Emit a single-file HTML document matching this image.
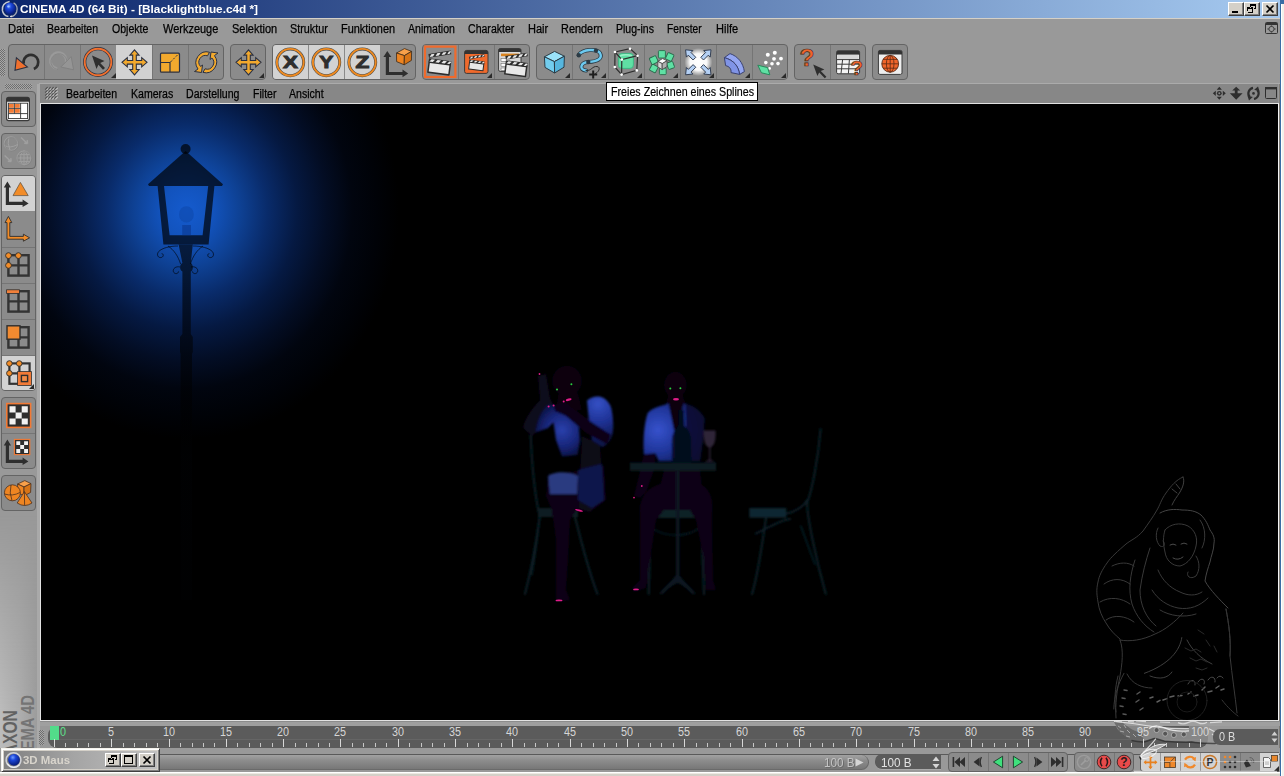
<!DOCTYPE html>
<html><head><meta charset="utf-8"><title>CINEMA 4D</title>
<style>
*{box-sizing:border-box;margin:0;padding:0}
html,body{width:1284px;height:776px;overflow:hidden;background:#999;font-family:"Liberation Sans",sans-serif;}
.a{position:absolute}
svg{position:absolute;overflow:visible}
#title{left:0;top:0;width:1280px;height:18px;background:linear-gradient(90deg,#0a246a,#a6caf0);}
#title .t{left:20px;top:1px;color:#fff;font-weight:bold;font-size:11px;line-height:16px;white-space:nowrap;transform:scaleX(1.072);transform-origin:0 0}
.wb{top:2px;width:16px;height:14px;background:#d4d0c8;border:1px solid;border-color:#fff #404040 #404040 #fff;box-shadow:inset -1px -1px 0 #808080}
#rb{left:1280px;top:0;width:4px;height:776px;background:linear-gradient(90deg,#fff 0 1px,#f3f0ea 1px);border-left:1px solid #3a6ea5;border-top:4px solid #3a6ea5}
#beige{left:0;top:18px;width:1280px;height:1px;background:#d4d0c8}
.menu span{position:absolute;top:22px;font-size:12px;line-height:14px;color:#000;-webkit-text-stroke:.25px #000;white-space:nowrap;transform:scaleX(.88);transform-origin:0 0}
.grp{top:44px;height:36px;background:#8b8b8b;border:1px solid #646464;border-radius:4px;overflow:hidden}
.grp i,.lgrp i{position:absolute;background:#757575}
.grp i{top:0;width:1px;height:34px}
.hl{position:absolute;background:#d2d2d2}
.grp .hl{top:0;height:34px;width:35px}
.lgrp{left:2px;width:34px;background:#8b8b8b;border:1px solid #646464;border-radius:4px;overflow:hidden}
.lgrp i{left:0;height:1px;width:32px}
.lgrp .hl{left:0;width:32px;height:35px}
.tri{position:absolute;width:0;height:0;border-left:5px solid transparent;border-bottom:5px solid #2a2a2a}
#vline{left:39px;top:83px;width:1241px;height:1px;background:#ababab}
#vmenu{left:40px;top:84px;width:1238px;height:19px;background:#878787}
#vmenu span{position:absolute;top:3px;font-size:12px;line-height:14px;color:#000;-webkit-text-stroke:.25px #000;white-space:nowrap;transform:scaleX(.88);transform-origin:0 0}
#vp{left:40px;top:103px;width:1239px;height:618px;background:#000;border:1px solid #e2e2e2;border-right-color:#f4f4f4;overflow:hidden}
#tip{left:606px;top:82px;width:152px;height:19px;background:#fff;border:1px solid #000}
#tip span{position:absolute;left:4px;top:2px;font-size:12px;line-height:14px;-webkit-text-stroke:.2px #000;white-space:nowrap;transform:scaleX(.89);transform-origin:0 0}
#tl{left:48px;top:726px;width:1160px;height:22px;background:#5b5b5b;border-radius:9px 9px 9px 9px}
#tll span{position:absolute;top:726px;font-size:12px;line-height:12px;color:#d6d6d6;white-space:nowrap;transform:translateX(-50%) scaleX(.9)}
.grip{background-image:repeating-conic-gradient(#6e6e6e 0 25%,#a8a8a8 0 50%);background-size:2px 2px}
</style></head><body>
<div class="a" id="title">
<svg style="left:1px;top:1px" width="18" height="16" viewBox="0 0 18 16">
<defs><radialGradient id="lg" cx="40%" cy="30%" r="70%"><stop offset="0" stop-color="#6f9cff"/><stop offset=".35" stop-color="#1c46d8"/><stop offset="1" stop-color="#061a78"/></radialGradient></defs>
<ellipse cx="9" cy="7.600" rx="5.300" ry="6" fill="url(#lg)"/>
<path d="M8.600,.4 C3.500,1.200 .8,5 1.400,9.400 C2,13 4.600,15.200 7.400,15.600" fill="none" stroke="#c4c8d0" stroke-width="1.500"/>
<path d="M12.600,1.800 C15.800,3.600 16.800,7.600 15.600,11 C14.600,13.600 12.400,15.400 9.600,15.800" fill="none" stroke="#a4a8b4" stroke-width="1.400"/>
<path d="M9.200,15.500 l1.600,-.4" stroke="#f0f0f4" stroke-width="1.200"/>
<ellipse cx="7.400" cy="5.400" rx="1.200" ry="1" fill="#9cc0ff"/>
</svg>
<div class="a t">CINEMA 4D (64 Bit) - [Blacklightblue.c4d *]</div>
<div class="a wb" style="left:1228px"><svg style="left:0;top:0" width="14" height="12" shape-rendering="crispEdges"><rect x="3" y="8" width="6" height="2" fill="#000"/></svg></div>
<div class="a wb" style="left:1244px"><svg style="left:0;top:0" width="14" height="12" shape-rendering="crispEdges"><path d="M5 1h6v2h-6zM5 3h1v2h-1zM10 3h1v3h-2v-1h1zM2 4h6v2h-6zM2 6h1v4h5v-4h-1v3h-4z" fill="#000" fill-rule="evenodd"/><rect x="7" y="6" width="1" height="4" fill="#000"/></svg></div>
<div class="a wb" style="left:1262px"><svg style="left:0;top:0" width="14" height="12"><path d="M3.5 2.5l7 7M10.5 2.5l-7 7" stroke="#000" stroke-width="1.7" fill="none"/></svg></div>
</div>
<div class="a" id="rb"></div>
<div class="a" id="beige"></div>
<div class="menu">
<span style="left:8px;transform:scaleX(.935)">Datei</span><span style="left:47px">Bearbeiten</span><span style="left:112px">Objekte</span><span style="left:163px;transform:scaleX(.915)">Werkzeuge</span><span style="left:232px;transform:scaleX(.915)">Selektion</span><span style="left:290px;transform:scaleX(.9)">Struktur</span><span style="left:341px;transform:scaleX(.91)">Funktionen</span><span style="left:408px">Animation</span><span style="left:468px">Charakter</span><span style="left:528px;transform:scaleX(.92)">Hair</span><span style="left:561px;transform:scaleX(.91)">Rendern</span><span style="left:616px;transform:scaleX(.875)">Plug-ins</span><span style="left:667px;transform:scaleX(.85)">Fenster</span><span style="left:716px;transform:scaleX(.92)">Hilfe</span>
</div>
<svg style="left:1265px;top:22px" width="13" height="12" viewBox="0 0 13 12"><rect x=".5" y=".5" width="12" height="11" rx="1" fill="#9a9a9a" stroke="#333"/><rect x="1" y="1" width="11" height="2" fill="#333"/><circle cx="6.5" cy="7" r="2.6" fill="none" stroke="#444" stroke-width="1"/><path d="M6.5 3.6v1M6.5 9.4v1M2.6 7h1M9.4 7h1" stroke="#333" stroke-width="1.4"/></svg>
<div class="a grip" style="left:0;top:49px;width:5px;height:27px"></div>
<div class="a grp" id="g1" style="left:8px;width:216px"><div class="hl" style="left:107px;width:36px"></div><i style="left:35px"></i><i style="left:71px"></i><i style="left:143px"></i><i style="left:179px"></i><div class="tri" style="left:102px;top:28px"></div></div>
<div class="a grp" id="g2" style="left:230px;width:36px"><div class="tri" style="left:28px;top:28px"></div></div>
<div class="a grp" id="g3" style="left:272px;width:144px"><div class="hl" style="left:0;width:107px"></div><i style="left:35px;background:#8a8a8a"></i><i style="left:71px;background:#8a8a8a"></i></div>
<div class="a grp" id="g4" style="left:422px;width:108px"><i style="left:35px"></i><i style="left:71px"></i><div class="tri" style="left:64px;top:28px"></div></div>
<div class="a grp" id="g5" style="left:536px;width:252px"><i style="left:35px"></i><i style="left:71px"></i><i style="left:107px"></i><i style="left:143px"></i><i style="left:179px"></i><i style="left:215px"></i><div class="tri" style="left:28px;top:28px"></div><div class="tri" style="left:64px;top:28px"></div><div class="tri" style="left:100px;top:28px"></div><div class="tri" style="left:136px;top:28px"></div><div class="tri" style="left:172px;top:28px"></div><div class="tri" style="left:208px;top:28px"></div><div class="tri" style="left:244px;top:28px"></div></div>
<div class="a grp" id="g6" style="left:794px;width:72px"><i style="left:35px"></i></div>
<div class="a grp" id="g7" style="left:872px;width:36px"></div>
<svg style="left:0;top:44px" width="1284" height="36" viewBox="0 44 1284 36">
<defs>
<path id="mv" d="M0,-12.5 L4.6,-7.2 L1.8,-7.2 L1.8,-1.8 L7.2,-1.8 L7.2,-4.6 L12.5,0 L7.2,4.6 L7.2,1.8 L1.8,1.8 L1.8,7.2 L4.6,7.2 L0,12.5 L-4.6,7.2 L-1.8,7.2 L-1.8,1.8 L-7.2,1.8 L-7.2,4.6 L-12.5,0 L-7.2,-4.6 L-7.2,-1.8 L-1.8,-1.8 L-1.8,-7.2 L-4.6,-7.2 Z"/>
<g id="clap"><path d="M-10.600,-3.200 L10.600,-3.200 L10.600,7 L-10.600,7 Z" fill="#e8e8e8" stroke="#2c2c2c" stroke-width="1.500" stroke-linejoin="round"/><path d="M-11.300,-7 L11.300,-7 L11.300,-3.200 L-11.300,-3.200 Z" fill="#2c2c2c"/><path d="M-8.500,-6.300l3.400,0l-2,2.500l-3.400,0zM-2.500,-6.300l3.400,0l-2,2.500l-3.400,0zM3.500,-6.300l3.400,0l-2,2.500l-3.400,0zM9.300,-6.300l2,0l0,0.500l-1.600,2l-2.400,0z" fill="#e8e8e8"/><g transform="rotate(-16.400 -11.300 -7.200)"><path d="M-11.300,-11.200 L11.300,-11.200 L11.300,-7.500 L-11.300,-7.500 Z" fill="#2c2c2c"/><path d="M-8.500,-10.500l3.400,0l-2,2.400l-3.400,0zM-2.500,-10.500l3.400,0l-2,2.400l-3.400,0zM3.500,-10.500l3.400,0l-2,2.400l-3.400,0zM9.300,-10.500l2,0l0,0.500l-1.600,1.900l-2.400,0z" fill="#e8e8e8"/></g></g>
<radialGradient id="glow"><stop offset="0" stop-color="#fff"/><stop offset=".6" stop-color="#fff" stop-opacity=".95"/><stop offset="1" stop-color="#fff" stop-opacity="0"/></radialGradient>
<path id="ar" d="M0,-6.500 L4.600,-.8 L1.900,-.8 L1.900,6 L-1.900,6 L-1.900,-.8 L-4.600,-.8 Z"/>
</defs>
<!-- undo -->
<path d="M23.700,63.900 A7.400,7.400 0 1 1 33.900,69" fill="none" stroke="#2e2e2e" stroke-width="2.700"/>
<path d="M16.400,57.800 L15,70.200 L27.400,67 Z" fill="#f0702e" stroke="#2b3040" stroke-width="1.100"/>
<!-- redo (disabled) -->
<g opacity=".6"><path d="M57.200,68.600 A8,8 0 1 1 66,63" fill="none" stroke="#a4a4a4" stroke-width="2.700"/><path d="M57.800,69.600 A8,8 0 1 1 66.600,64" fill="none" stroke="#7c7c7c" stroke-width=".8"/><path d="M71.200,56.600 L73.600,69.800 L60.800,67 Z" fill="#9c9c9c" stroke="#7a7a7a" stroke-width="1"/></g>
<!-- select -->
<circle cx="98" cy="62" r="13.3" fill="none" stroke="#2b3040" stroke-width="3.2"/>
<circle cx="98" cy="62" r="13.3" fill="none" stroke="#f0702e" stroke-width="1.9"/>
<path d="M92,55.5 L104.5,61 L100.2,63 L105,68 L103,69.8 L98.4,64.8 L96.5,69 Z" fill="#2e2e2e"/>
<!-- move -->
<use href="#mv" x="134.5" y="62.3" fill="#f2a92e" stroke="#2b3142" stroke-width="1.1"/>
<!-- scale -->
<rect x="160.5" y="53.2" width="19" height="19" rx="1" fill="#f2a92e" stroke="#2b3142" stroke-width="1.2"/>
<path d="M160.5,62.5 h9.5 v9.5" fill="none" stroke="#2b3142" stroke-width="1.2"/>
<path d="M170.5,62 L179,53.5" stroke="#2b3142" stroke-width="1" stroke-dasharray="2.2 1.6"/>
<!-- rotate -->
<g fill="#f2a92e" stroke="#2b3142" stroke-width="1">
<path d="M209.5,52.2 A10.8,10.8 0 0 0 198,69 L194.5,71.5 L201.5,72.5 L202.5,65 L200.6,66.5 A6.6,6.6 0 0 1 207.5,55.8 Z"/>
<path d="M203,72.4 A10.8,10.8 0 0 0 214.5,55.6 L218,53 L211,52 L210,59.5 L211.9,58 A6.6,6.6 0 0 1 205,68.8 Z"/>
</g>
<!-- move+ -->
<use href="#mv" x="248.5" y="62.3" fill="#f2a92e" stroke="#2b3142" stroke-width="1.1"/>
<!-- XYZ -->
<g fill="none"><g stroke="#4a4a4a" stroke-width="3"><circle cx="290.3" cy="62.3" r="13.4"/><circle cx="326.3" cy="62.3" r="13.4"/><circle cx="362.3" cy="62.3" r="13.4"/></g>
<g stroke="#ee8a20" stroke-width="1.9"><circle cx="290.3" cy="62.3" r="13.4"/><circle cx="326.3" cy="62.3" r="13.4"/><circle cx="362.3" cy="62.3" r="13.4"/></g></g>
<g fill="#2e2e2e" font-family="Liberation Sans" font-weight="bold" font-size="17.400" text-anchor="middle" stroke="#2e2e2e" stroke-width="1">
<text transform="translate(290.3 68.4) scale(1.28 1)">X</text><text transform="translate(326.3 68.4) scale(1.22 1)">Y</text><text transform="translate(362.3 68.4) scale(1.3 1)">Z</text></g>
<!-- axis cube -->
<path d="M387.3,51 L391.3,57 L389,57 L389,72 L402.5,72 L402.5,69.6 L408.2,73.6 L402.5,77.2 L402.5,75 L385.8,75 L385.8,57 L383.4,57 Z" fill="#2e2e2e"/>
<g stroke="#3a2a1a" stroke-width=".8"><path d="M396.5,53 L404.5,48.6 L411.6,51.4 L404.4,55.6 Z" fill="#f8a04a"/><path d="M396.5,53 L404.4,55.6 L404.2,64.8 L396.6,61.6 Z" fill="#ee8522"/><path d="M404.4,55.6 L411.6,51.4 L411.4,60.4 L404.2,64.8 Z" fill="#d87416"/></g>
<!-- render 1 -->
<rect x="425" y="46.6" width="30.4" height="30.4" fill="none" stroke="#f06a2c" stroke-width="2.2"/>
<use href="#clap" transform="translate(439.300 66.600) rotate(7.500)"/>
<!-- render 2 -->
<rect x="464.6" y="50.4" width="23.4" height="23" rx="2" fill="#f06a2c" stroke="#3a3a3a" stroke-width="1"/>
<path d="M464.6,52.4 a2,2 0 0 1 2,-2 h19.4 a2,2 0 0 1 2,2 v1.6 h-23.4z" fill="#333"/>
<use href="#clap" transform="translate(476.400 65.200) rotate(7.500) scale(.68)"/>
<!-- render 3 -->
<rect x="498.6" y="48.6" width="22.4" height="22.8" rx="1.5" fill="#d8d8d8" stroke="#3a3a3a" stroke-width="1"/>
<path d="M498.6,50.1 a1.5,1.5 0 0 1 1.5,-1.5 h19.4 a1.5,1.5 0 0 1 1.5,1.5 v2 h-22.4z" fill="#333"/>
<rect x="501" y="53.6" width="18" height="2.6" fill="#d8821e"/><rect x="501" y="58.5" width="8" height="2.8" fill="#fff" stroke="#555" stroke-width=".5"/><rect x="501" y="63.4" width="8" height="2.8" fill="#fff" stroke="#555" stroke-width=".5"/><rect x="501" y="68" width="8" height="2.4" fill="#fff" stroke="#555" stroke-width=".5"/>
<use href="#clap" transform="translate(516 68.400) rotate(7.500) scale(.98)"/>
<use href="#clap" transform="translate(517 60) rotate(10) scale(.5)" opacity=".0"/>
<!-- cube -->
<g stroke="#2b3a44" stroke-width="1" stroke-linejoin="round"><path d="M544.4,56.8 L554.6,51.4 L564.4,56.2 L554.4,61.6 Z" fill="#9be3fa"/><path d="M544.4,56.8 L554.4,61.6 L554.6,73 L545,67.4 Z" fill="#72cdee"/><path d="M554.4,61.6 L564.4,56.2 L564,67.2 L554.6,73 Z" fill="#56b6de"/></g>
<!-- spline -->
<g fill="none" stroke-linecap="round"><path d="M578.6,55 C583,49 597,48.5 600,53 C603,59 597,61.5 588.5,62 C580,62.5 579,70 586,70.5" stroke="#2b3a44" stroke-width="4"/><path d="M578.6,55 C583,49 597,48.5 600,53 C603,59 597,61.5 588.5,62 C580,62.5 579,70 586,70.5" stroke="#6ccaf0" stroke-width="2.4"/>
<path d="M586,70.5 C592,71 592,66 597,66.5 C601,67 599,72 595.5,73.5" stroke="#2e2e2e" stroke-width="1"/></g>
<circle cx="578.8" cy="55.2" r="2.2" fill="#2b3a44"/><circle cx="596" cy="50.6" r="2.2" fill="#2b3a44"/><circle cx="588.3" cy="62" r="2.2" fill="#2b3a44"/>
<path d="M589.2,74.4 h8 M593.2,70.4 v8" stroke="#1e1e1e" stroke-width="2"/>
<!-- nurbs -->
<rect x="618.4" y="53.4" width="15" height="15" rx="3.4" fill="#5fe0a4" stroke="#3fb884" stroke-width="1"/>
<path d="M620,56 q6,-2.5 12,0" stroke="#9af0c8" stroke-width="1.6" fill="none"/>
<g fill="none" stroke="#2e2e2e" stroke-width="1.2"><path d="M615,52 L630,48.6 L637.6,55.6 L636.8,70.4 L621.6,74.6 L614.8,67 Z"/><path d="M615,52 L621.8,59.6 L637.6,55.6 M621.8,59.6 L621.6,74.6"/></g>
<g fill="#fff"><circle cx="615" cy="52" r="1.3"/><circle cx="630" cy="48.8" r="1.3"/><circle cx="637.6" cy="55.8" r="1.3"/><circle cx="636.8" cy="70.4" r="1.3"/><circle cx="621.6" cy="74.6" r="1.3"/><circle cx="614.8" cy="67" r="1.3"/><circle cx="621.8" cy="59.6" r="1.3"/></g>
<!-- array -->
<g fill="#5fe0a4" stroke="#2a6a4c" stroke-width=".9"><rect x="658.4" y="50.6" width="7" height="7.4" rx="1"/><rect x="666.4" y="53.4" width="6.6" height="7" rx="1" transform="rotate(25 669.7 57)"/><rect x="667.4" y="62" width="6.4" height="6.8" rx="1" transform="rotate(-20 670.6 65.4)"/><rect x="659.4" y="68" width="6.8" height="6.6" rx="1"/><rect x="650.4" y="65" width="6.8" height="6.8" rx="1" transform="rotate(28 653.8 68.4)"/><rect x="650.2" y="56.6" width="7" height="7" rx="1" transform="rotate(-25 653.7 60)"/></g>
<g stroke="#444" stroke-width=".8"><path d="M657.8,61.4 L662.6,58.6 L667,60.8 L662.2,63.6 Z" fill="#fff"/><path d="M657.8,61.4 L662.2,63.6 L662.2,69.6 L657.8,67 Z" fill="#d8d8d8"/><path d="M662.2,63.6 L667,60.8 L667,66.6 L662.2,69.6 Z" fill="#b0b0b0"/></g>
<!-- arrows -->
<circle cx="698.4" cy="62" r="14" fill="url(#glow)"/>
<g fill="#b4d0f4" stroke="#2e3a4e" stroke-width=".9"><use href="#ar" transform="translate(690.2 54.4) rotate(-45)"/><use href="#ar" transform="translate(706.4 54.4) rotate(45)"/><use href="#ar" transform="translate(690.2 70.2) rotate(-135)"/><use href="#ar" transform="translate(706.4 70.2) rotate(135)"/></g>
<!-- bend -->
<g stroke="#3a4270" stroke-width="1" stroke-linejoin="round"><path d="M724.4,57.6 L730,53.6 C738,56.4 743,62.6 744.4,71.6 L739.6,74.4 C738.4,66 734,60.4 724.4,57.6 Z" fill="#94a6f2"/><path d="M724.4,57.6 C734,60.4 738.4,66 739.6,74.4 L731,72.6 C731.6,68.6 729,66.4 725.6,65.6 Z" fill="#8094e6"/></g>
<!-- particles -->
<g fill="#fff"><circle cx="767.8" cy="54.8" r="2"/><circle cx="774.8" cy="52.8" r="2"/><circle cx="774" cy="58.8" r="1.9"/><circle cx="781" cy="58.6" r="1.9"/><circle cx="765.8" cy="62.6" r="1.8"/><circle cx="772" cy="63.8" r="1.8"/><circle cx="778" cy="63.6" r="1.8"/><circle cx="769.6" cy="68.4" r="1.4"/><circle cx="765.4" cy="68.6" r="1.4"/></g>
<path d="M757.8,65.2 L767.6,67.6 L769.8,74.8 L761.4,72.8 Z" fill="#5fe0a4" stroke="#2a8a5c" stroke-width="1"/>
<!-- help -->
<g font-family="Liberation Sans" font-weight="bold" fill="#f0642a" stroke="#3a2a22" stroke-width=".7"><text x="799.600" y="65.600" font-size="24.500">?</text></g>
<path d="M813.200,64.600 L824.400,69.400 L820.800,71 L826.400,76.800 L824.800,78.200 L819.200,72.600 L817.400,76 Z" fill="#2e2e2e"/>
<!-- help table -->
<g><rect x="836.600" y="50.800" width="23" height="23" rx="1.500" fill="#f4f4f4" stroke="#3a3a3a" stroke-width="1"/><path d="M836.600,52.300 a1.500,1.500 0 0 1 1.500,-1.500 h20 a1.500,1.500 0 0 1 1.500,1.500 v2.400 h-23z" fill="#333"/><rect x="837.600" y="54.800" width="21" height="4.400" fill="#d8d8d8"/><path d="M837,59.600h22M837,64.200h22M837,68.800h22M842.600,59.600l-1.600,14M849.400,59.600l-1,14" stroke="#3a3a3a" stroke-width="1" fill="none"/></g>
<g font-family="Liberation Sans" font-weight="bold" fill="#f0642a" stroke="#3a2a22" stroke-width=".7"><text x="850.400" y="75.400" font-size="20.500">?</text></g>
<!-- globe -->
<rect x="878.400" y="50.400" width="23.600" height="24" rx="1.500" fill="#eeeeee" stroke="#3a3a3a" stroke-width="1"/><path d="M878.400,51.900 a1.500,1.500 0 0 1 1.500,-1.500 h20.600 a1.500,1.500 0 0 1 1.500,1.500 v2.600 h-23.600z" fill="#333"/>
<circle cx="890.200" cy="63.800" r="8.400" fill="#f0642a" stroke="#5a2a14" stroke-width=".9"/>
<g fill="none" stroke="#5a2a14" stroke-width=".8"><ellipse cx="890.200" cy="63.800" rx="3.800" ry="8.400"/><path d="M890.200,55.400v16.800M881.800,63.800h16.800M883,59.400h14.400M883,68.200h14.400"/></g>
</svg>
<div class="a" id="vline"></div>
<div class="a" style="left:1279px;top:84px;width:1px;height:664px;background:#807d78"></div>
<div class="a" id="vmenu">
<svg style="left:5px;top:3px" width="14" height="14" viewBox="0 0 14 14"><path d="M1.2,3.4l2.400,-2.400M1.2,6.4l2.400,-2.400M1.2,9.4l2.400,-2.400M1.2,12.4l2.400,-2.400M4.2,3.4l2.400,-2.400M4.2,6.4l2.400,-2.400M4.2,9.4l2.400,-2.400M4.2,12.4l2.400,-2.400M7.2,3.4l2.400,-2.400M7.2,6.4l2.400,-2.400M7.2,9.4l2.400,-2.400M7.2,12.4l2.400,-2.400M10.2,3.4l2.400,-2.400M10.2,6.4l2.400,-2.400M10.2,9.4l2.400,-2.400M10.2,12.4l2.400,-2.400" stroke="#c4c4c4" stroke-width="1.100"/><path d="M0.2,2.6l2.400,-2.400M0.2,5.6l2.400,-2.400M0.2,8.6l2.400,-2.400M0.2,11.6l2.400,-2.400M3.2,2.6l2.400,-2.400M3.2,5.6l2.400,-2.400M3.2,8.6l2.400,-2.400M3.2,11.6l2.400,-2.400M6.2,2.6l2.400,-2.400M6.2,5.6l2.400,-2.400M6.2,8.6l2.400,-2.400M6.2,11.6l2.400,-2.400M9.2,2.6l2.400,-2.400M9.2,5.6l2.400,-2.400M9.2,8.6l2.400,-2.400M9.2,11.6l2.400,-2.400" stroke="#4e4e4e" stroke-width="1.100"/></svg>
<span style="left:26px">Bearbeiten</span><span style="left:91px">Kameras</span><span style="left:146px">Darstellung</span><span style="left:213px">Filter</span><span style="left:249px">Ansicht</span>
<svg style="left:1172px;top:2px" width="66" height="16" viewBox="1212 86 66 16">
<g fill="#2e2e2e"><path d="M1219.3,86.8l2.6,3h-5.2zM1219.3,99.8l2.6,-3h-5.2zM1212.8,93.3l3,-2.6v5.2zM1225.8,93.3l-3,-2.6v5.2z"/><circle cx="1219.3" cy="93.3" r="2.4"/><circle cx="1219.3" cy="93.3" r="1" fill="#878787"/>
<path d="M1236.2,86.8l4,3.6h-2.6v2.8h5l-6.4,6.6l-6.4,-6.6h5v-2.8h-2.6z"/>
</g>
<g fill="none" stroke="#2e2e2e" stroke-width="2.200"><path d="M1253,87.800a5.600,5.600 0 0 0 -3.400,9"/><path d="M1254,99a5.600,5.600 0 0 0 3.400,-9"/></g>
<g fill="#2e2e2e"><path d="M1247.400,95.400l5.400,1.600l-3.800,3.400z"/><path d="M1259.600,91.400l-5.400,-1.600l3.800,-3.400z"/><circle cx="1253.500" cy="93.400" r="1.300"/></g>
<rect x="1265.5" y="87.5" width="11" height="11" rx="1" fill="none" stroke="#2e2e2e" stroke-width="1"/><rect x="1265" y="87" width="12" height="2.4" fill="#2e2e2e"/>
</svg>
</div>
<div class="a" id="vp">
<div class="a" id="glow" style="left:-160px;top:-190px;width:620px;height:620px;background:radial-gradient(ellipse 212px 228px at 306px 297px,#155bce 0%,#1253bd 12%,#0e4194 25%,#092b6a 38%,#051942 52%,#030d24 66%,#01050f 78%,#000207 90%,#000 100%)"></div>
</div>
<div class="a" id="tip"><span>Freies Zeichnen eines Splines</span></div>
<svg class="scene" style="left:0;top:0;clip-path:inset(104px 6px 56px 41px)" width="1284" height="776" viewBox="0 0 1284 776">
<defs>
<linearGradient id="pole" x1="0" y1="244" x2="0" y2="600" gradientUnits="userSpaceOnUse"><stop offset="0" stop-color="#000" stop-opacity=".66"/><stop offset=".25" stop-color="#000" stop-opacity=".56"/><stop offset=".45" stop-color="#000" stop-opacity=".5"/><stop offset=".6" stop-color="#010204" stop-opacity=".6"/><stop offset="1" stop-color="#010204" stop-opacity=".5"/></linearGradient>
</defs>
<!-- lamp -->
<g fill="#000" fill-opacity=".68">
<circle cx="185.6" cy="149" r="5"/>
<path d="M185.6,151 L223,184.2 L222,186 L149,186 L148,184.2 Z"/>
<path d="M157.6,186 L164,186 L169.6,235.2 L202.6,235.2 L208.2,186 L214.4,186 L208.6,244.4 L163.4,244.4 Z"/>
<path d="M178.6,244.4 L192.8,244.4 L190.8,263 C193.4,264 193.6,270.6 190.8,271.4 L190.8,334 L192.800,337 L192.800,352 L192,354 L192,600 L180.6,600 L180.6,354 L180,352 L180,337 L182.4,334 L182.4,271.4 C179.2,270.6 179.4,264 182.4,263 Z" fill="url(#pole)" fill-opacity="1"/>
</g>
<ellipse cx="186.4" cy="214.4" rx="7.4" ry="8.2" fill="#0a3c96" fill-opacity=".35"/>
<rect x="182.2" y="225" width="8.8" height="10.2" fill="#0a348a" fill-opacity=".55"/>
<g fill="none" stroke="#000" stroke-opacity=".6" stroke-width="1">
<path d="M178,246 C170,246 162,248 158.6,251.6 C156,255 158.4,258.4 161.6,257.4 C164,256.4 163.6,253.6 161.6,253.6"/>
<path d="M193,246 C201,246 209,248 212.4,251.6 C215,255 212.6,258.4 209.4,257.4 C207,256.4 207.4,253.6 209.4,253.6"/>
<path d="M168,246 C174,250 178,256 180.6,264"/><path d="M203,246 C197,250 193,256 190.4,264"/>
<path d="M180,267 C176,266 172.6,268.4 173.4,271.6 C174.4,274.6 178.4,274 178.6,271.4"/>
<path d="M191,267 C195,266 198.4,268.4 197.6,271.6 C196.6,274.6 192.6,274 192.4,271.4"/>
</g>

<defs>
<radialGradient id="sh1" cx="598" cy="404" r="40" gradientUnits="userSpaceOnUse"><stop offset="0" stop-color="#3450c4"/><stop offset=".45" stop-color="#1f3296"/><stop offset="1" stop-color="#0c1448"/></radialGradient>
<radialGradient id="sh1b" cx="562" cy="430" r="30" gradientUnits="userSpaceOnUse"><stop offset="0" stop-color="#2a40ac"/><stop offset=".55" stop-color="#18267a"/><stop offset="1" stop-color="#090f3a"/></radialGradient>
<radialGradient id="sh2" cx="658" cy="430" r="46" gradientUnits="userSpaceOnUse"><stop offset="0" stop-color="#3652cc"/><stop offset=".5" stop-color="#1f3498"/><stop offset="1" stop-color="#0b1444"/></radialGradient>
<filter id="bl1"><feGaussianBlur stdDeviation="1"/></filter>
<filter id="bl2" x="-5%" y="-5%" width="110%" height="110%"><feGaussianBlur stdDeviation="1.1"/></filter>
</defs>
<g filter="url(#bl2)">
<!-- chairs -->
<g fill="none" stroke="#0b222b" stroke-width="2" stroke-linecap="round">
<path d="M820.6,429 C818,460 812,490 807.4,502 C806,512 816,560 825.800,594"/>
<path d="M766,518 C762,545 758,575 752,594"/><path d="M785,514 C796,512 804,506 807.400,500"/><path d="M755.700,533.600 C768,528 780,520 790,519"/><path d="M800.800,526 L815,564.500" stroke-width="1.400"/>
<path d="M530.700,435 C532,470 536,500 539.700,517 C536,545 530,575 525,594"/><path d="M575,517 C582,545 590,575 597.500,594"/><path d="M540,512 C538,540 534,560 532,575" stroke-width="1.300"/>
<path d="M651,518 L648.700,594"/><path d="M701,518 L704,594"/><path d="M655,530 C670,538 690,536 699,528" stroke-width="1.300"/>
</g>
<rect x="749.300" y="508" width="37" height="9.600" fill="#0c2630"/>
<rect x="651.600" y="508" width="49" height="10" fill="#0b2028"/>
<rect x="538" y="508" width="40" height="9" fill="#091a22"/>
<!-- woman 2 -->
<path d="M660,484 L700,484 C710,488 714,500 712,515 L713,580 L716,590 L706,590 L704,560 L696,520 L690,510 L664,510 L656,520 L650,560 L646,588 L634,592 L632,588 L640,580 L640,515 C638,500 646,488 660,484 Z" fill="#0c0616"/>
<path d="M664,470 L700,470 L702,486 L660,486 Z" fill="#0a0614"/>
<ellipse cx="675.400" cy="385" rx="11.500" ry="13.500" fill="#07050c"/>
<path d="M668,396 L683,396 L688,410 L664,410 Z" fill="#08060e"/>
<path d="M647.700,413 C652,408 660,406 666.400,404.400 L671,402 L676,428 L681,402 L683.600,403.600 C692,405 700,410 704.600,418.400 L703,440 L700,461 L658.600,461 L655.500,453.500 L643.800,454.200 C643,440 644,424 647.700,413 Z" fill="url(#sh2)"/>
<path d="M668,401 L676,440 L684,401 Z" fill="#08060e"/>
<path d="M686,404 C694,406 700,410 704.600,418.400 L703,440 L700,461 L684,461 L686,430 Z" fill="#080c30" opacity=".85"/>
<path d="M643.800,454.200 L655.500,453.500 L654,470 L646,492 L640,498 L634,496 L638,480 Z" fill="#0c0616"/>
<!-- table -->
<rect x="630" y="462.400" width="86" height="8.400" fill="#0a1a24"/>
<path d="M676,471 L679.400,471 L679.400,575 C684,582 692,588 696,594 L692,594 C688,589 682,585 677.700,583 C673,585 667,589 663,594 L659,594 C663,588 671,582 676,575 Z" fill="#081620"/>
<path d="M678.900,410 L683.600,410 L684.400,426 C689,430 691.300,435 691.300,442 L691.300,462 L671.900,462 L671.900,442 C671.900,435 674,430 678,426 Z" fill="#05071a"/>
<path d="M673.500,432 L674.500,432 L674.500,458 L673.500,458 Z" fill="#1a2050" opacity=".8"/>
<path d="M703.800,430.500 L715.500,430.500 C716.200,440 714,446.500 710.400,447.500 L710.400,459.600 L714.500,461.600 L705,461.600 L709,459.600 L709,447.500 C705.400,446.500 703.200,440 703.800,430.500 Z" fill="#34283f" opacity=".9"/>
<!-- woman 1 -->
<path d="M548,476 L604,466 L606,500 L590,512 L576,510 L570,520 L568,560 L566,590 L570,600 L556,602 L556,590 L556,540 L552,510 L546,496 Z" fill="#0c0616"/>
<path d="M582,436 L600,444 L604,500 L590,512 L578,508 Z" fill="#0d0718"/>
<ellipse cx="567" cy="381" rx="15" ry="15.500" fill="#07050c"/>
<path d="M558,395 L578,393 L582,410 L556,412 Z" fill="#08060e"/>
<path d="M523,428 C524,420 532,408 540,400 L538,376 L546,374 L550,398 L556,410 L544,424 L532,436 Z" fill="#0f081c"/>
<path d="M587,400.500 C591,396.600 596,396 599.400,396.600 C606,398 611,404 611.900,411.400 C613.500,420 613.500,428 612.700,433.200 C611,440 607,445 602.600,447.200 L592,440 L588.500,416 Z" fill="url(#sh1)"/>
<path d="M547.300,405.200 C551,404 556,405 560,407 L565.200,406.700 L578.400,422.300 L580,440 L577.600,455 L562,456.600 L556,440 L553.500,422.300 L548,428 L535.600,432.400 C537,422 541,411 547.300,405.200 Z" fill="url(#sh1b)"/>
<path d="M554,405 L564,401 L590,421 L611,435 L607,444 L586,433 L566,416 L555,411 Z" fill="#0a0512"/>
<path d="M548,476 C556,470 570,472 578,476 L577,494 L550,494 Z" fill="#2c3a80"/>
<path d="M578,470 L602,464 L604,500 L592,508 L578,500 Z" fill="#11174c"/>
</g>
<g fill="#28d040"><circle cx="557" cy="389.600" r="1"/><circle cx="571.400" cy="384.200" r="1"/><circle cx="670.300" cy="388.600" r="1"/><circle cx="680.400" cy="388.300" r="1"/></g>
<g fill="#e01c88"><ellipse cx="568.700" cy="399.700" rx="3" ry="1.200" transform="rotate(-15 568.700 399.700)"/><ellipse cx="676" cy="399.300" rx="3" ry="1.300"/>
<circle cx="539.500" cy="374" r=".9"/><circle cx="548.600" cy="406.400" r="1"/><circle cx="553.600" cy="405.600" r="1"/><circle cx="563.700" cy="401.400" r="1"/>
<circle cx="641.800" cy="486" r=".9"/><circle cx="634" cy="497.600" r=".9"/><ellipse cx="636" cy="589.400" rx="3" ry=".9"/><ellipse cx="559" cy="600.400" rx="3.400" ry=".9"/><ellipse cx="579" cy="510.400" rx="4" ry=".9" transform="rotate(15 579 510.400)"/></g>
</svg>
<div class="a" style="left:37px;top:84px;width:3px;height:664px;background:#a9a9a9"></div>
<div class="a grip" style="left:5px;top:84px;width:27px;height:5px"></div>
<div class="a lgrp" style="left:1px;width:35px;top:91px;height:36px"></div>
<div class="a lgrp" style="left:1px;width:35px;top:133px;height:36px"></div>
<div class="a lgrp" style="left:1px;width:35px;top:175px;height:216px"><div class="hl" style="top:0;width:33px"></div><div class="hl" style="top:180px;width:33px;height:34px"></div><i style="top:71px;width:33px"></i><i style="top:107px;width:33px"></i><i style="top:143px;width:33px"></i><i style="top:179px;width:33px"></i><div class="tri" style="left:27px;top:208px"></div></div>
<div class="a lgrp" style="left:1px;width:35px;top:397px;height:72px"><i style="top:35px;width:33px"></i></div>
<div class="a lgrp" style="left:1px;width:35px;top:475px;height:36px"></div>
<svg style="left:0;top:84px" width="40" height="440" viewBox="0 84 40 440">
<defs><g id="ck"><rect x="0" y="0" width="15" height="15" fill="#2e2e2e"/><path d="M0,0h5v5h-5zM10,0h5v5h-5zM5,5h5v5h-5zM0,10h5v5h-5zM10,10h5v5h-5z" fill="#f2f2f2"/></g></defs>
<!-- layout -->
<rect x="6.6" y="97.4" width="22.8" height="23.2" rx="2" fill="#fff" stroke="#3a3a3a" stroke-width="1.2"/>
<path d="M6.6,99.4a2,2 0 0 1 2,-2h18.8a2,2 0 0 1 2,2v2.4h-22.8z" fill="#333"/>
<g fill="#f47c36"><rect x="9" y="104" width="4.8" height="3.8"/><rect x="15" y="104" width="4.8" height="3.8"/><rect x="9" y="109" width="4.8" height="3.8"/><rect x="15" y="109" width="4.8" height="3.8"/></g>
<path d="M14.400,103.200v10.400M8.400,108.400h12.200" stroke="#333" stroke-width=".9"/><rect x="8.4" y="103.2" width="19.2" height="15.4" fill="none" stroke="#333" stroke-width=".9"/>
<path d="M20.6,103.2v15.4M8.4,113.6h19.2" stroke="#333" stroke-width=".9"/>
<!-- disabled -->
<g fill="none" stroke="#a2a2a2" stroke-width="1" opacity=".9"><circle cx="11" cy="143.6" r="6.8"/><path d="M4.4,145.6q6,3 13,-1M9,137q-2,6 1,13.4"/><circle cx="24" cy="158" r="7"/><ellipse cx="24" cy="158" rx="3.4" ry="7"/><path d="M24,151v14M17,158h14M18,154.6h12M18,161.6h12"/><path d="M21,137.6l6,5.6M27.6,143.6l-3.4,-.4M27.6,143.6l-.4,-3.4M4.6,155.6l6,5.6M11.2,161.6l-3.4,-.4M11.2,161.6l-.4,-3.4" stroke-width="1.4"/></g>
<g fill="none" stroke="#7e7e7e" stroke-width=".6" opacity=".8" transform="translate(.7 .7)"><circle cx="11" cy="143.6" r="6.8"/><circle cx="24" cy="158" r="7"/></g>
<!-- model mode -->
<path d="M7.4,181.6 L11,187.4 L9,187.4 L9,201.8 L22.6,201.8 L22.6,199.6 L28.6,203.4 L22.6,207 L22.6,205 L5.8,205 L5.8,187.4 L3.8,187.4 Z" fill="#2e2e2e"/>
<path d="M20.4,182.4 L28.2,195.6 L13,195.6 Z" fill="#f28c28" stroke="#5a4a3a" stroke-width=".7"/>
<!-- axis mode -->
<path d="M8.4,216.4 L11.8,222.6 L9.8,222.6 L9.8,236.4 L23.4,236.4 L23.4,234.2 L29.6,237.8 L23.4,241.2 L23.4,239.2 L7,239.2 L7,222.6 L5,222.6 Z" fill="#f28c28" stroke="#2e2e2e" stroke-width=".9"/>
<!-- points -->
<g fill="none" stroke="#333" stroke-width="2.4"><rect x="8.4" y="255.2" width="20.2" height="20.4"/><path d="M18.5,255.2v20.4M8.4,265.4h20.2"/></g>
<g fill="#f28c28" stroke="#2e2e2e" stroke-width=".9"><circle cx="8.5" cy="255.6" r="2.9"/><circle cx="18.4" cy="255.6" r="2.9"/><circle cx="8.5" cy="265.4" r="2.9"/></g>
<!-- edges -->
<g fill="none" stroke="#333" stroke-width="2.4"><rect x="8.4" y="291.2" width="20.2" height="20.4"/><path d="M18.5,291.2v20.4M8.4,301.4h20.2"/></g>
<rect x="6.6" y="289.8" width="12.8" height="3.6" fill="#f2803a" stroke="#2e2e2e" stroke-width=".8"/>
<!-- polys -->
<g fill="none" stroke="#333" stroke-width="2.4"><rect x="8.4" y="327.2" width="20.2" height="20.4"/><path d="M18.5,327.2v20.4M8.4,337.4h20.2"/></g>
<rect x="7" y="325.8" width="13" height="13.4" fill="#f28a30" stroke="#2e2e2e" stroke-width="1.4"/>
<!-- uv points -->
<g fill="none" stroke="#333" stroke-width="2.2"><rect x="9.4" y="363.4" width="20.2" height="20.4"/><path d="M19.4,363.4v10M9.4,373.4h10"/></g>
<g fill="#f28c28" stroke="#2e2e2e" stroke-width=".9"><circle cx="9.4" cy="363.5" r="2.8"/><circle cx="19.2" cy="363.5" r="2.8"/><circle cx="9.4" cy="373.3" r="2.8"/></g>
<rect x="17.6" y="371.6" width="13.8" height="13.8" fill="#f27a36" stroke="#2e2e2e" stroke-width=".8"/><rect x="21.4" y="375.4" width="6.2" height="6.2" fill="#f28c48" stroke="#2e2e2e" stroke-width="1.4"/>
<!-- texture -->
<rect x="6.8" y="403.6" width="23.8" height="23.8" fill="#2e2e2e" stroke="#f27a36" stroke-width="1.6"/><use href="#ck" transform="translate(9.5 406.3) scale(1.22)"/>
<!-- texture axis -->
<path d="M7.4,439.6 L11,445.4 L9,445.4 L9,459.8 L22.6,459.8 L22.6,457.6 L28.4,461.4 L22.6,465 L22.6,463 L5.8,463 L5.8,445.4 L3.8,445.4 Z" fill="#2e2e2e"/>
<rect x="14.4" y="439.4" width="15.4" height="15.2" fill="#2e2e2e" stroke="#f27a36" stroke-width="1.1"/><use href="#ck" transform="translate(16.3 441.2) scale(.78)"/>
<!-- objects -->
<g stroke="#4a3020" stroke-width=".8"><path d="M17.6,484 L24.8,480.6 L31,483.6 L24,487 Z" fill="#f8a04a"/><path d="M17.6,484 L24,487 L24,496 L17.8,492.6 Z" fill="#ee8522"/><path d="M24,487 L31,483.6 L30.6,492.4 L24,496 Z" fill="#d87416"/>
<circle cx="12.4" cy="492.8" r="8" fill="#ee8522"/><path d="M4.6,494q8,2.6 15.6,-1.6M11,485q-2,8 1,15.6" fill="none"/>
<path d="M24.4,491.6 L32,503 Q24.6,508 17.2,503 Z" fill="#ee8522"/><path d="M24.4,491.6 L24.6,505.4" fill="none"/></g>
</svg>
<div class="a" style="left:0;top:515px;width:37px;height:233px;background:linear-gradient(90deg,#bcbcbc,#adadad 55%,#9c9c9c 100%);-webkit-mask-image:linear-gradient(transparent,#000 85%);mask-image:linear-gradient(transparent,#000 85%)"></div>
<svg style="left:0;top:680px;clip-path:inset(0 0 0 0)" width="37" height="68" viewBox="0 680 37 68"><g font-family="Liberation Sans" font-weight="bold" text-anchor="end">
<text transform="translate(16.5 710) rotate(-90) scale(.75 1)" font-size="21" fill="#626262">MAXON</text>
<text transform="translate(34 695) rotate(-90) scale(.8 1)" font-size="18.500" fill="#747474">CINEMA 4D</text></g></svg>
<div class="a" style="left:40px;top:721px;width:1240px;height:5px;background:linear-gradient(#8c8c8c 0 1px,#9f9f9f 1px)"></div>
<div class="a grip" style="left:39px;top:730px;width:5px;height:15px"></div>
<div class="a" id="tl"></div>
<div class="a" style="left:56px;top:739px;width:1146px;height:1px;background:#656565"></div>
<div class="a" style="left:50px;top:726px;width:9px;height:14px;background:#52dc8a"></div>
<svg style="left:0;top:0;pointer-events:none" width="1284" height="776" viewBox="0 0 1284 776"><defs><clipPath id="cpb0"><rect x="41" y="720" width="1243" height="56"/></clipPath></defs>
<g clip-path="url(#cpb0)">
<path d="M1114,721.500 C1122,722 1130,723 1134.400,723.600 C1140,724.500 1145,725.200 1148.700,725.800 C1152,726.400 1155,727 1157.300,727.200 C1168,728.400 1180,728.800 1188.900,728.700 L1188.900,725.800 L1208.900,725.800 L1208.900,728.700 C1216,733 1222,738 1226.100,741.600 C1222,743 1218,743.200 1214.600,743 C1210,743.200 1205,743.200 1200.300,743 C1197,742.400 1194,741.800 1191.700,741.600 C1182,741.800 1172,741.400 1164.500,740.800 C1161,739.600 1158,738.600 1154.500,738 C1150,739.600 1146,741 1143,741.600 C1139,741.400 1135,740.800 1131.500,740.100 C1126,737 1121,733 1117.200,728.700 Z" fill="#999" opacity=".72"/>
<path d="M1114,722 C1118,730 1124,737 1131.500,740.100 C1135,740.800 1139,741.400 1143,741.600 L1143,733 C1136,732 1128,728 1122,722 Z" fill="#4a4a4a" opacity=".55"/>
<path d="M1114,721.500 C1130,723 1145,725.200 1157.300,727.200 C1168,728.400 1180,728.800 1188.900,728.700" fill="none" stroke="#f0f0f0" stroke-width="1.200" opacity=".8"/>
<path d="M1149,728.600 C1153,725 1160,725.400 1166,728.400 C1172,731 1180,731.600 1189,730.800" fill="none" stroke="#f4f4f4" stroke-width="1.300" opacity=".85"/>
<path d="M1131.500,740.600 C1135,741.300 1139,741.900 1143,742.100 C1146,741.500 1150,740.100 1154.500,738.500 C1158,739.100 1161,740.100 1164.500,741.300 C1172,741.900 1182,742.300 1191.700,742.100 C1197,742.600 1205,743.700 1214.600,743.500 L1226,742" fill="none" stroke="#2a2a2a" stroke-width="1.500" opacity=".7"/>
<path d="M1208.900,728.700 C1214,731 1222,737 1226.100,741.600 M1212,734 C1218,739 1224,742 1232,741" fill="none" stroke="#ececec" stroke-width="1.100" opacity=".8"/>
<g fill="#555" stroke="#cfcfcf" stroke-width=".6"><circle cx="1156.600" cy="730.100" r="2.500"/><circle cx="1165.200" cy="733.700" r="2.500"/><circle cx="1173.800" cy="735.100" r="2.500"/><circle cx="1183.800" cy="734.400" r="2.500"/></g>
<path d="M1116,721.500 l6,.3 M1128,721.600 l6,.2 M1136,721 l10,.6 M1178,722.600 q5,2.400 10,0 t10,0 t9,-.4 M1210,722.600 l12,-.8 M1160,722 l10,.4" stroke="#e4e4e4" stroke-width="1.200" fill="none" opacity=".8"/>
<g stroke="#d8d8d8" stroke-width=".9" fill="none" opacity=".65"><path d="M1118,726 l3,2 M1124,725 l2,3 M1120,731 l4,1 M1127,730 l3,3 M1126,736 l4,1 M1133,734 l3,3 M1137,728 l4,2 M1140,735 l3,2"/></g>
</g>
</svg>
<svg class="a" style="left:0;top:726px" width="1284" height="22" shape-rendering="crispEdges">
<rect x="54" y="13" width="1" height="8" fill="#d8d8d8"/>
<rect x="65" y="17" width="1" height="4" fill="#c8c8c8"/>
<rect x="77" y="17" width="1" height="4" fill="#c8c8c8"/>
<rect x="88" y="17" width="1" height="4" fill="#c8c8c8"/>
<rect x="100" y="17" width="1" height="4" fill="#c8c8c8"/>
<rect x="111" y="13" width="1" height="8" fill="#d8d8d8"/>
<rect x="123" y="17" width="1" height="4" fill="#c8c8c8"/>
<rect x="134" y="17" width="1" height="4" fill="#c8c8c8"/>
<rect x="146" y="17" width="1" height="4" fill="#c8c8c8"/>
<rect x="157" y="17" width="1" height="4" fill="#c8c8c8"/>
<rect x="169" y="13" width="1" height="8" fill="#d8d8d8"/>
<rect x="180" y="17" width="1" height="4" fill="#c8c8c8"/>
<rect x="192" y="17" width="1" height="4" fill="#c8c8c8"/>
<rect x="203" y="17" width="1" height="4" fill="#c8c8c8"/>
<rect x="214" y="17" width="1" height="4" fill="#c8c8c8"/>
<rect x="226" y="13" width="1" height="8" fill="#d8d8d8"/>
<rect x="237" y="17" width="1" height="4" fill="#c8c8c8"/>
<rect x="249" y="17" width="1" height="4" fill="#c8c8c8"/>
<rect x="260" y="17" width="1" height="4" fill="#c8c8c8"/>
<rect x="272" y="17" width="1" height="4" fill="#c8c8c8"/>
<rect x="283" y="13" width="1" height="8" fill="#d8d8d8"/>
<rect x="295" y="17" width="1" height="4" fill="#c8c8c8"/>
<rect x="306" y="17" width="1" height="4" fill="#c8c8c8"/>
<rect x="318" y="17" width="1" height="4" fill="#c8c8c8"/>
<rect x="329" y="17" width="1" height="4" fill="#c8c8c8"/>
<rect x="340" y="13" width="1" height="8" fill="#d8d8d8"/>
<rect x="352" y="17" width="1" height="4" fill="#c8c8c8"/>
<rect x="363" y="17" width="1" height="4" fill="#c8c8c8"/>
<rect x="375" y="17" width="1" height="4" fill="#c8c8c8"/>
<rect x="386" y="17" width="1" height="4" fill="#c8c8c8"/>
<rect x="398" y="13" width="1" height="8" fill="#d8d8d8"/>
<rect x="409" y="17" width="1" height="4" fill="#c8c8c8"/>
<rect x="421" y="17" width="1" height="4" fill="#c8c8c8"/>
<rect x="432" y="17" width="1" height="4" fill="#c8c8c8"/>
<rect x="444" y="17" width="1" height="4" fill="#c8c8c8"/>
<rect x="455" y="13" width="1" height="8" fill="#d8d8d8"/>
<rect x="467" y="17" width="1" height="4" fill="#c8c8c8"/>
<rect x="478" y="17" width="1" height="4" fill="#c8c8c8"/>
<rect x="489" y="17" width="1" height="4" fill="#c8c8c8"/>
<rect x="501" y="17" width="1" height="4" fill="#c8c8c8"/>
<rect x="512" y="13" width="1" height="8" fill="#d8d8d8"/>
<rect x="524" y="17" width="1" height="4" fill="#c8c8c8"/>
<rect x="535" y="17" width="1" height="4" fill="#c8c8c8"/>
<rect x="547" y="17" width="1" height="4" fill="#c8c8c8"/>
<rect x="558" y="17" width="1" height="4" fill="#c8c8c8"/>
<rect x="570" y="13" width="1" height="8" fill="#d8d8d8"/>
<rect x="581" y="17" width="1" height="4" fill="#c8c8c8"/>
<rect x="593" y="17" width="1" height="4" fill="#c8c8c8"/>
<rect x="604" y="17" width="1" height="4" fill="#c8c8c8"/>
<rect x="616" y="17" width="1" height="4" fill="#c8c8c8"/>
<rect x="627" y="13" width="1" height="8" fill="#d8d8d8"/>
<rect x="638" y="17" width="1" height="4" fill="#c8c8c8"/>
<rect x="650" y="17" width="1" height="4" fill="#c8c8c8"/>
<rect x="661" y="17" width="1" height="4" fill="#c8c8c8"/>
<rect x="673" y="17" width="1" height="4" fill="#c8c8c8"/>
<rect x="684" y="13" width="1" height="8" fill="#d8d8d8"/>
<rect x="696" y="17" width="1" height="4" fill="#c8c8c8"/>
<rect x="707" y="17" width="1" height="4" fill="#c8c8c8"/>
<rect x="719" y="17" width="1" height="4" fill="#c8c8c8"/>
<rect x="730" y="17" width="1" height="4" fill="#c8c8c8"/>
<rect x="742" y="13" width="1" height="8" fill="#d8d8d8"/>
<rect x="753" y="17" width="1" height="4" fill="#c8c8c8"/>
<rect x="765" y="17" width="1" height="4" fill="#c8c8c8"/>
<rect x="776" y="17" width="1" height="4" fill="#c8c8c8"/>
<rect x="787" y="17" width="1" height="4" fill="#c8c8c8"/>
<rect x="799" y="13" width="1" height="8" fill="#d8d8d8"/>
<rect x="810" y="17" width="1" height="4" fill="#c8c8c8"/>
<rect x="822" y="17" width="1" height="4" fill="#c8c8c8"/>
<rect x="833" y="17" width="1" height="4" fill="#c8c8c8"/>
<rect x="845" y="17" width="1" height="4" fill="#c8c8c8"/>
<rect x="856" y="13" width="1" height="8" fill="#d8d8d8"/>
<rect x="868" y="17" width="1" height="4" fill="#c8c8c8"/>
<rect x="879" y="17" width="1" height="4" fill="#c8c8c8"/>
<rect x="891" y="17" width="1" height="4" fill="#c8c8c8"/>
<rect x="902" y="17" width="1" height="4" fill="#c8c8c8"/>
<rect x="914" y="13" width="1" height="8" fill="#d8d8d8"/>
<rect x="925" y="17" width="1" height="4" fill="#c8c8c8"/>
<rect x="936" y="17" width="1" height="4" fill="#c8c8c8"/>
<rect x="948" y="17" width="1" height="4" fill="#c8c8c8"/>
<rect x="959" y="17" width="1" height="4" fill="#c8c8c8"/>
<rect x="971" y="13" width="1" height="8" fill="#d8d8d8"/>
<rect x="982" y="17" width="1" height="4" fill="#c8c8c8"/>
<rect x="994" y="17" width="1" height="4" fill="#c8c8c8"/>
<rect x="1005" y="17" width="1" height="4" fill="#c8c8c8"/>
<rect x="1017" y="17" width="1" height="4" fill="#c8c8c8"/>
<rect x="1028" y="13" width="1" height="8" fill="#d8d8d8"/>
<rect x="1040" y="17" width="1" height="4" fill="#c8c8c8"/>
<rect x="1051" y="17" width="1" height="4" fill="#c8c8c8"/>
<rect x="1062" y="17" width="1" height="4" fill="#c8c8c8"/>
<rect x="1074" y="17" width="1" height="4" fill="#c8c8c8"/>
<rect x="1085" y="13" width="1" height="8" fill="#d8d8d8"/>
<rect x="1097" y="17" width="1" height="4" fill="#c8c8c8"/>
<rect x="1108" y="17" width="1" height="4" fill="#c8c8c8"/>
<rect x="1120" y="17" width="1" height="4" fill="#c8c8c8"/>
<rect x="1131" y="17" width="1" height="4" fill="#c8c8c8"/>
<rect x="1143" y="13" width="1" height="8" fill="#d8d8d8"/>
<rect x="1154" y="17" width="1" height="4" fill="#c8c8c8"/>
<rect x="1166" y="17" width="1" height="4" fill="#c8c8c8"/>
<rect x="1177" y="17" width="1" height="4" fill="#c8c8c8"/>
<rect x="1189" y="17" width="1" height="4" fill="#c8c8c8"/>
<rect x="1200" y="13" width="1" height="8" fill="#d8d8d8"/>
</svg>
<div id="tll"><span style="left:63px;color:#5ee08c">0</span><span style="left:111px">5</span><span style="left:169px">10</span><span style="left:226px">15</span><span style="left:283px">20</span><span style="left:340px">25</span><span style="left:398px">30</span><span style="left:455px">35</span><span style="left:512px">40</span><span style="left:570px">45</span><span style="left:627px">50</span><span style="left:684px">55</span><span style="left:742px">60</span><span style="left:799px">65</span><span style="left:856px">70</span><span style="left:914px">75</span><span style="left:971px">80</span><span style="left:1028px">85</span><span style="left:1085px">90</span><span style="left:1143px">95</span><span style="left:1200px">100</span></div>
<div class="a" style="left:1213px;top:729px;width:65px;height:16px;background:#5b5b5b;border-radius:7px 0 0 7px"></div>
<div class="a" style="left:1219px;top:730px;font-size:12px;line-height:14px;color:#dcdcdc;transform:scaleX(.9);transform-origin:0 0">0 B</div>
<svg style="left:1271px;top:731px" width="7" height="12"><path d="M3.5,.5l3,4h-6zM3.5,11.500l3,-4h-6z" fill="#d0d0d0"/></svg>
<!-- power slider row -->
<div class="a" style="left:160px;top:754px;width:1120px;height:1px;background:#5a5a5a"></div>
<div class="a" style="left:160px;top:755px;width:709px;height:15px;background:linear-gradient(#a2a2a2,#8c8c8c 40%,#777 100%);border-radius:0 8px 8px 0;border-right:1px solid #666;border-bottom:1px solid #6a6a6a"></div>
<div class="a" style="left:869px;top:755px;width:411px;height:16px;background:#999"></div>
<div class="a" style="left:824px;top:755px;font-size:13px;line-height:15px;color:#c4c4c4;text-shadow:1px 1px 0 #6a6a6a;transform:scaleX(.9);transform-origin:0 0;white-space:nowrap">100 B</div>
<svg style="left:855px;top:757px" width="9" height="11"><path d="M.5,1.500l8,4l-8,4z" fill="#d6d6d6"/></svg>
<div class="a" style="left:875px;top:754px;width:66px;height:16px;background:#5b5b5b;border-radius:7px 0 0 7px;border-bottom:1px solid #aaa"></div>
<div class="a" style="left:881px;top:755px;font-size:13px;line-height:15px;color:#e2e2e2;transform:scaleX(.9);transform-origin:0 0;white-space:nowrap">100 B</div>
<svg style="left:932px;top:756px" width="8" height="13"><path d="M4,.5l3.500,4.500h-7zM4,12.500l3.500,-4.500h-7z" fill="#d6d6d6"/></svg>
<div class="a grp" style="left:948px;top:752px;width:120px;height:20px;border-radius:4px"><i style="left:19px;height:18px"></i><i style="left:39px;height:18px"></i><i style="left:59px;height:18px"></i><i style="left:79px;height:18px"></i><i style="left:99px;height:18px"></i></div>
<div class="a grp" style="left:1074px;top:752px;width:60px;height:20px;border-radius:4px"><i style="left:19px;height:18px"></i><i style="left:39px;height:18px"></i></div>
<div class="a grp" style="left:1140px;top:752px;width:139px;height:20px;border-radius:4px 0 0 4px;border-right:0"><div class="hl" style="left:0;width:79px;height:18px"></div><div class="hl" style="left:119px;width:20px;height:18px"></div><i style="left:19px;height:18px;background:#9a9a9a"></i><i style="left:39px;height:18px;background:#9a9a9a"></i><i style="left:59px;height:18px;background:#9a9a9a"></i><i style="left:99px;height:18px"></i><div class="tri" style="left:133px;top:13px"></div></div>
<svg style="left:940px;top:752px" width="344" height="20" viewBox="940 752 344 20">
<g fill="#2e2e2e"><path d="M952.6,757h1.6v10h-1.600zM960,757v10l-5.600,-5zM965,757v10l-5.600,-5z"/>
<path d="M979.6,757.600v8.800l-6,-4.400z"/><path d="M981.400,757q-2.400,5 0,10" fill="none" stroke="#2e2e2e" stroke-width="1.300"/>
<path d="M1036.400,757.600v8.800l6,-4.400z"/><path d="M1034.600,757q2.400,5 0,10" fill="none" stroke="#2e2e2e" stroke-width="1.300"/>
<path d="M1063.400,757h-1.600v10h1.600zM1056,757v10l5.600,-5zM1051,757v10l5.600,-5z"/></g>
<path d="M1002.600,756.200v11.600l-9.200,-5.800z" fill="#3ee07c" stroke="#1a3a28" stroke-width=".9"/>
<path d="M1013.400,756.200v11.600l9.200,-5.800z" fill="#3ee07c" stroke="#1a3a28" stroke-width=".9"/>
<circle cx="1084" cy="762" r="6.600" fill="#8a8a8a" stroke="#9c9c9c" stroke-width="1.400"/><path d="M1081,765l5,-5" stroke="#9e9e9e" stroke-width="1.600"/><circle cx="1086.600" cy="759.600" r="2" fill="none" stroke="#9e9e9e" stroke-width="1"/>
<circle cx="1104" cy="762" r="6.800" fill="#e84a4a" stroke="#3a2020" stroke-width=".9"/><path d="M1102,757.800q-3,4.200 0,8.400M1106,757.800q3,4.200 0,8.400" fill="none" stroke="#2a1a1a" stroke-width="1.500"/>
<circle cx="1124" cy="762" r="6.800" fill="#e84a4a" stroke="#3a2020" stroke-width=".9"/><text x="1124" y="766.400" font-family="Liberation Sans" font-weight="bold" font-size="12" text-anchor="middle" fill="#2a1a1a">?</text>
<!-- mini tools -->
<path d="M1150.500,756.600v11.400M1144.800,762.300h11.400" stroke="#e8801e" stroke-width="1.700" fill="none"/><path d="M1150.500,755.400l2.200,2.600h-4.400zM1150.500,769.200l2.200,-2.600h-4.400zM1143.600,762.300l2.600,-2.200v4.400zM1157.400,762.300l-2.600,-2.200v4.400z" fill="#e8801e"/>
<rect x="1164.500" y="757" width="11" height="10.600" fill="#f0882a" stroke="#4a3a2a" stroke-width=".8"/><path d="M1164.500,762.400h5.400v5.200M1170,762.200l5,-5" fill="none" stroke="#4a3a2a" stroke-width=".8"/>
<g fill="none" stroke="#f0882a" stroke-width="2.200"><path d="M1185,759.600a5.600,5.600 0 0 1 9,-1"/><path d="M1195,764.600a5.600,5.600 0 0 1 -9,1"/></g><path d="M1196,757l-.4,4.400l-3.600,-2.400zM1184,767.200l.4,-4.400l3.600,2.400z" fill="#f0882a"/>
<circle cx="1210" cy="762" r="6.600" fill="none" stroke="#c8782a" stroke-width="1.500"/><text x="1210" y="766" font-family="Liberation Sans" font-weight="bold" font-size="10.500" text-anchor="middle" fill="#2e2e2e">P</text>
<g fill="#f0882a"><circle cx="1225" cy="757" r="1.300"/><circle cx="1230" cy="757" r="1.300"/><circle cx="1225" cy="762" r="1.300"/></g>
<g fill="#2e2e2e"><circle cx="1235" cy="757" r="1.300"/><circle cx="1230" cy="762" r="1.300"/><circle cx="1235" cy="762" r="1.300"/><circle cx="1225" cy="767" r="1.300"/><circle cx="1230" cy="767" r="1.300"/><circle cx="1235" cy="767" r="1.300"/></g>
<path d="M1244,763l3,-3.600l4,6.600l-5,1.600z" fill="#2e2e2e"/><path d="M1249.600,757.600a4,4 0 0 1 4,5.400M1250.600,760a2,2 0 0 1 1.400,2.400" fill="none" stroke="#5a5a5a" stroke-width=".9"/>
<path d="M1263.500,757.500h5l2,2v8h-7z" fill="#f4f4f4" stroke="#4a4a4a" stroke-width=".8"/><path d="M1265,762h4M1265,764h4" stroke="#888" stroke-width=".7"/><rect x="1271.500" y="755.500" width="6" height="6" fill="#e8862a" stroke="#4a3a2a" stroke-width=".8"/>
</svg>
<!-- 3D Maus mini window -->
<div class="a" style="left:1px;top:748px;width:159px;height:24px;background:#d4d0c8;border:1px solid;border-color:#f4f2ec #404040 #404040 #f4f2ec;box-shadow:inset 1px 1px 0 #fff,inset -1px -1px 0 #808080"></div>
<div class="a" style="left:4px;top:751px;width:153px;height:18px;background:linear-gradient(90deg,#808080,#a4a4a4 45%,#c0c0c0 100%)"></div>
<svg style="left:5px;top:752px" width="18" height="16" viewBox="0 0 18 16"><ellipse cx="8.5" cy="8" rx="7.400" ry="7.200" fill="none" stroke="#d0d2d8" stroke-width="1.500"/><circle cx="9" cy="7.800" r="5.900" fill="url(#lg)"/><path d="M2.400,11.500A7.400,7.200 0 0 0 14.500,13" fill="none" stroke="#eceef2" stroke-width="1.100"/></svg>
<div class="a" style="left:23px;top:752px;font-weight:bold;font-size:11px;line-height:16px;color:#d8d4cc;white-space:nowrap;transform:scaleX(1.04);transform-origin:0 0">3D Maus</div>
<div class="a wb" style="left:105px;top:753px;width:16px;height:14px"><svg style="left:0;top:0" width="14" height="12" shape-rendering="crispEdges"><path d="M5 1h6v2h-6zM5 3h1v2h-1zM10 3h1v3h-2v-1h1zM2 4h6v2h-6zM2 6h1v4h5v-4h-1v3h-4z" fill="#000" fill-rule="evenodd"/><rect x="7" y="6" width="1" height="4" fill="#000"/></svg></div>
<div class="a wb" style="left:121px;top:753px;width:16px;height:14px"><svg style="left:0;top:0" width="14" height="12" shape-rendering="crispEdges"><path d="M2 1h9v9h-9zM3 3v6h7v-6z" fill="#000" fill-rule="evenodd"/></svg></div>
<div class="a wb" style="left:139px;top:753px;width:16px;height:14px"><svg style="left:0;top:0" width="14" height="12"><path d="M3.500 2.500l7 7M10.500 2.500l-7 7" stroke="#000" stroke-width="1.700" fill="none"/></svg></div>
<div class="a" style="left:0;top:772px;width:1280px;height:4px;background:linear-gradient(#fff 0 1px,#ece9e2 1px 2px,#d4d0c8 2px)"></div>
<svg style="left:0;top:0;pointer-events:none" width="1284" height="776" viewBox="0 0 1284 776">
<defs><filter id="wb"><feGaussianBlur stdDeviation=".5"/></filter>
<clipPath id="cpv"><rect x="41" y="104" width="1237" height="616"/></clipPath>
<clipPath id="cpb"><rect x="41" y="720" width="1243" height="56"/></clipPath></defs>
<g clip-path="url(#cpv)" fill="none" stroke="#5c5c5c" stroke-width="1" stroke-linecap="round" filter="url(#wb)" opacity=".62">
<path d="M1183,477 C1176,480 1171,486 1166,493 C1161,500 1160,505 1157,510 C1153,517 1148,524 1143,531 C1137,538 1131,540 1126,544 C1118,551 1111,557 1107,563 C1102,570 1099,576 1098,582 C1096,590 1097,596 1098,602 C1099,610 1102,617 1106,623 C1110,630 1115,635 1120,639"/>
<path d="M1183,477 C1185,481 1183,487 1180,492 C1177,497 1174,500 1172,505 M1176,484 l4,5 M1172,489 l5,4" stroke="#6a6a6a"/>
<path d="M1160,513 C1167,509 1175,509 1182,510 C1190,510 1196,511 1201,515 C1206,520 1208,525 1210,530 C1213,534 1215,538 1214,543 C1214,550 1211,556 1210,562 C1208,568 1206,574 1205,581 C1210,590 1220,600 1228,608" stroke="#707070"/>
<path d="M1165,530 C1170,524 1180,522 1188,526 C1195,530 1198,538 1196,546 C1194,556 1188,564 1180,566 C1172,566 1166,560 1165,552 C1163,544 1163,536 1165,530" />
<path d="M1170,545 q3,-2 6,0 M1181,544 q3,-2 6,0 M1173,558 q5,3 10,-1" stroke="#7a7a7a"/>
<path d="M1158,528 C1155,534 1156,542 1160,546 C1164,548 1166,544 1163,541 M1200,520 C1206,528 1206,540 1202,548 M1196,556 C1200,562 1200,570 1196,576 C1190,580 1186,576 1188,572"/>
<path d="M1150,548 C1146,560 1142,575 1140,590 C1140,605 1146,618 1156,626 M1135,560 C1130,575 1128,590 1132,604 C1136,616 1144,626 1154,632 M1112,566 C1120,562 1128,562 1134,566 M1104,584 C1112,578 1122,578 1130,584 M1100,602 C1110,596 1122,598 1130,604 M1106,620 C1114,614 1126,616 1134,622"/>
<path d="M1158,570 C1162,580 1170,588 1180,592 C1188,596 1196,596 1202,592 M1152,590 C1158,600 1168,606 1178,608 C1190,610 1200,606 1208,598 M1160,610 C1170,616 1184,618 1196,614"/>
<path d="M1226,609 C1229,625 1231,640 1230,656 C1232,675 1235,695 1237,713 M1120,640 C1124,650 1122,665 1120,676 C1117,690 1115,704 1116,718 M1183,613 C1175,622 1165,630 1155,634 C1143,640 1130,642 1120,640"/>
<path d="M1181.800,637.600 C1180,650 1170,664 1144.400,673.300 M1187,640 C1192,650 1200,658 1212,664 M1150,676 C1160,680 1168,678 1172,672" stroke="#666"/>
<path d="M1124,673.300 C1118,684 1114,696 1113.800,709 M1127,674 C1132,684 1142,688 1152,688 M1118,676 C1115,688 1114,700 1116,712" stroke="#5a5a5a"/>
<path d="M1185,648 l6,3 l5,-2 l5,3 M1190,658 l6,3 l5,-2 l6,3 M1196,668 l6,2 l5,-2 M1206,640 l4,6 M1214,646 l3,6 M1198,630 l6,4" stroke="#444"/>
<g stroke="#8c8c8c" stroke-width="1.500"><path d="M1124,690 l3,.6 M1122,698 l3,.6 M1120,706 l3,.6 M1123,714 l3,.6 M1137,694 l3,-2 M1136,702 l3,-2 M1140,710 l3,-2"/>
<path d="M1150,698 l3,-1 M1157,702 l3,-1.600 M1163,700 l4,-1.400 M1170,697 l4,-1 M1178,696 l4,-.6 M1188,694 l3,-2 M1194,696 l4,-1 M1202,690 l3,-3 M1208,692 l4,-1 M1216,688 l3,-2 M1221,690 l3,-1" stroke="#9a9a9a"/></g>
<path d="M1188,684 c2,-5 8,-5 7,1 M1198,682 c3,-5 8,-3 6,2 M1208,680 c3,-5 8,-3 7,2 M1217,678 q3,-4 6,0" stroke="#777"/>
<circle cx="1187" cy="700.500" r="20" stroke="#333"/><circle cx="1187" cy="702" r="10" stroke="#2a2a2a"/>
<path d="M1226,609 C1229,625 1231,640 1230,656 M1222,700 C1228,708 1234,713 1238,716" stroke="#555"/>
</g>
<g clip-path="url(#cpb)">
<path d="M1166,744.400 C1160,748 1152,752 1146,754 C1143,755.500 1141,756.600 1140,757.300 C1142,753 1148,749 1154,746 C1158,744.400 1162,744 1166,744.400 Z" fill="#b0b0b0" stroke="#f6f6f6" stroke-width="1" opacity=".9"/>
<path d="M1155.900,738.700 C1152,744 1147,749 1143,753" fill="none" stroke="#ececec" stroke-width="1.100" opacity=".85"/>
<ellipse cx="1148.500" cy="753.800" rx="8.500" ry="3.600" transform="rotate(-22 1148.500 753.800)" fill="none" stroke="#f8f8f8" stroke-width="1" opacity=".85"/>
<path d="M1139.500,756.500 l1.500,3" stroke="#222" stroke-width="1.400"/>
<path d="M1134,771.300 L1277,771.300" stroke="#f0f0f0" stroke-width="1" opacity=".8"/>
<path d="M1160,761.500 L1278,761.500" stroke="#ececec" stroke-width=".8" opacity=".5"/>
</g>
</svg>
</body></html>
